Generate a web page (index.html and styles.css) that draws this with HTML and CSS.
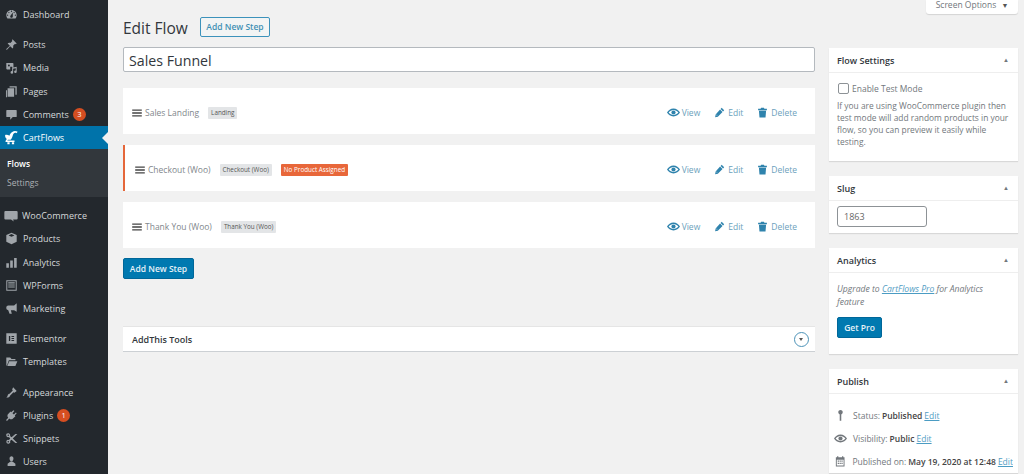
FILE: index.html
```html
<!DOCTYPE html>
<html lang="en">
<head>
  <meta charset="UTF-8" />
  <title>Edit Flow</title>
  <link rel="stylesheet" href="styles.css">
</head>
<body>
  <svg class="defs" width="0" height="0">
    <symbol id="i-eye" viewBox="0 0 20 20"><path fill-rule="evenodd" d="M10 4C5.500 4 2 7 0 10c2 3 5.500 6 10 6s8-3 10-6c-2-3-5.500-6-10-6zm0 2.200c2.600 0 5.800 1.400 7.500 3.800-1.700 2.400-4.900 3.800-7.500 3.800S4.200 12.400 2.500 10C4.200 7.600 7.400 6.200 10 6.200z"/><circle cx="10" cy="10" r="3.200"/></symbol>
    <symbol id="i-pencil" viewBox="0 0 20 20"><path fill-rule="evenodd" d="M14 1.500l4.500 4.500-2 2-4.500-4.500zM11 4.500L15.500 9 7 17.500l-5 1 1-5zM5 13.500L4.500 15.500l2-.5z"/></symbol>
    <symbol id="i-trash" viewBox="0 0 20 20"><path d="M7.500 1.500h5l1 1.500H18V6H2V3h4.500zM3.500 7h13l-1 12h-11z"/></symbol>
    <symbol id="i-menu" viewBox="0 0 20 20"><path d="M2 4h16v2.200H2zM2 8.900h16v2.200H2zM2 13.800h16V16H2z"/></symbol>
  </svg>

  <div class="layout">
    <nav class="sidebar">
      <div class="menu-group">
        <a class="menu-item"><svg viewBox="0 0 20 20"><path fill-rule="evenodd" d="M3.760 16h12.480c1.100-1.370 1.760-3.110 1.760-5 0-4.420-3.580-8-8-8s-8 3.580-8 8c0 1.890.66 3.630 1.760 5zM10 4c.55 0 1 .45 1 1s-.45 1-1 1-1-.45-1-1 .45-1 1-1zM6 6c.55 0 1 .45 1 1s-.45 1-1 1-1-.45-1-1 .45-1 1-1zm8 0c.55 0 1 .45 1 1s-.45 1-1 1-1-.45-1-1 .45-1 1-1zm-5.370 5.550L12 7v6c0 1.100-.9 2-2 2s-2-.9-2-2c0-.57.24-1.080.63-1.450zM4 10c.55 0 1 .45 1 1s-.45 1-1 1-1-.45-1-1 .45-1 1-1zm12 0c.55 0 1 .45 1 1s-.45 1-1 1-1-.45-1-1 .45-1 1-1z"/></svg>Dashboard</a>
      </div>
      <div class="menu-group">
        <a class="menu-item"><svg viewBox="0 0 20 20"><path d="M11.500 2l6.500 6.500-1.500 1-1-.5-3 3c.5 2 .2 3.200-.8 4.300L8 12.500 3 18l-1 0 0-1 5.500-5L4 8.300c1.100-1 2.300-1.300 4.300-.8l3-3-.5-1z"/></svg>Posts</a>
        <a class="menu-item"><svg viewBox="0 0 20 20"><path fill-rule="evenodd" d="M2 3h10l1 1v6h-2V9H8v4H3l-1-1zM6 5.500a1.500 1.500 0 1 0 0 3 1.500 1.500 0 0 0 0-3zM18 9v7.500a2 2 0 1 1-1.500-1.900V11l-4 1v5.500a2 2 0 1 1-1.500-1.900V10.500z"/></svg>Media</a>
        <a class="menu-item"><svg viewBox="0 0 20 20"><path d="M7 2h11v13h-2V4H7zM4 5h10v13H4zM1.500 8H3v11h9v-.1H1.500z"/></svg>Pages</a>
        <a class="menu-item"><svg viewBox="0 0 20 20"><path d="M3 3h14a1 1 0 0 1 1 1v9a1 1 0 0 1-1 1h-5l-4 4v-4H3a1 1 0 0 1-1-1V4a1 1 0 0 1 1-1z"/></svg>Comments<span class="badge">3</span></a>
        <a class="menu-item current"><svg class="logo" viewBox="0 0 20 20"><path d="M11 2.500c2-1.500 4.500-1.500 7-.5l-.8 2.200c-1.700-.7-3.200-.7-4.200.3-.8.8-1 1.800-1.500 3.500-.6 2-1.300 3.800-2.700 5H6c-1 0-1.400.4-1.500 1H14v2H2c0-2 .8-3.300 2-4C2.300 11 1.300 9.300 1.500 6.500c2-.6 4.300-.2 5.700 1.300.6-2.200 1.700-4.200 3.800-5.300zM4.500 16.200h3V19h-3zM10.500 16.200h3V19h-3z"/></svg>CartFlows</a>
        <div class="submenu">
          <a class="sub-item active">Flows</a>
          <a class="sub-item">Settings</a>
        </div>
      </div>
      <div class="menu-group">
        <a class="menu-item"><svg class="woo" viewBox="0 0 20 20"><path d="M2 3h16a1.500 1.500 0 0 1 1.500 1.500v9A1.500 1.500 0 0 1 18 15h-5l1 3-4-3H2a1.500 1.500 0 0 1-1.500-1.500v-9A1.500 1.500 0 0 1 2 3z"/></svg>WooCommerce</a>
        <a class="menu-item"><svg viewBox="0 0 20 20"><path d="M10 1l8 3.500v10.500L10 19l-8-4V4.500zM10 3.200L5.500 5.200 10 7.200l4.500-2z"/></svg>Products</a>
        <a class="menu-item"><svg viewBox="0 0 20 20"><path d="M2 11h4v7H2zM8 7h4v11H8zM14 3h4v15h-4z"/></svg>Analytics</a>
        <a class="menu-item"><svg viewBox="0 0 20 20"><path fill-rule="evenodd" d="M2 2h16v16H2zM3.500 3.500v13h13v-13zM5 5h10v2H5zM5 8.500h10v1.500H5zM5 11.500h10V13H5z"/></svg>WPForms</a>
        <a class="menu-item"><svg viewBox="0 0 20 20"><path d="M18 2v13l-4-2.500H9l1.500 5.500H7L5 12.500C3 12.500 2 11 2 9s1-3.500 3-3.500h9z"/></svg>Marketing</a>
      </div>
      <div class="menu-group">
        <a class="menu-item"><svg viewBox="0 0 20 20"><path fill-rule="evenodd" d="M2 2h16v16H2zM6 6v8h2V6zM10 6v1.600h4V6zM10 9.200v1.600h4V9.200zM10 12.400V14h4v-1.600z"/></svg>Elementor</a>
        <a class="menu-item"><svg viewBox="0 0 20 20"><path d="M2 4h6l2 2h6v2H6l-3 8H2zM6.500 9.500H19L16 17H3.500z"/></svg>Templates</a>
      </div>
      <div class="menu-group">
        <a class="menu-item"><svg viewBox="0 0 20 20"><path d="M12.500 2l5.500 5.500-3.500 3-1.500-1-5 5c-.8 2-2.500 3.500-6 3.500 1.800-1.200 2-3 2.500-4.500.5-1 1.500-1.500 2.500-1.500l5-5-1-1.500z"/></svg>Appearance</a>
        <a class="menu-item"><svg viewBox="0 0 20 20"><path d="M13 2l1.500 1.200-3 3.300 2.200 2 3-3.300L18 6.500l-3 3.500 1 1-4.500 4.500c-2 .8-3.500.3-5-1L3.500 18H2v-1.500l3-3c-1.200-1.500-1.700-3-.8-5L8.500 4l1 1z"/></svg>Plugins<span class="badge">1</span></a>
        <a class="menu-item"><svg viewBox="0 0 20 20"><path fill-rule="evenodd" d="M5 2a3 3 0 0 1 2.800 4.100L10 8l6-5h3l-7 7 7 7h-3l-6-5-2.200 1.900A3 3 0 1 1 6 12.200L8 10 6 7.800A3 3 0 1 1 5 2zm0 1.800a1.200 1.200 0 1 0 0 2.400 1.200 1.200 0 0 0 0-2.400zm0 10a1.200 1.200 0 1 0 0 2.400 1.200 1.200 0 0 0 0-2.400z"/></svg>Snippets</a>
        <a class="menu-item"><svg viewBox="0 0 20 20"><path d="M10 2c1.800 0 3 1.500 3 3.500S11.800 10 10 10 7 7.500 7 5.500 8.200 2 10 2zM8 10.500h4l4 3V17H4v-3.500z"/></svg>Users</a>
      </div>
    </nav>

    <main class="content">
      <div class="screen-bar"><button class="screen-options">Screen Options <span class="caret">▼</span></button></div>
      <div class="columns">
        <div class="main-col">
          <div class="page-head">
            <h1>Edit Flow</h1>
            <a class="btn-outline">Add New Step</a>
          </div>
          <input class="title-input" type="text" value="Sales Funnel" />

          <div class="step">
            <svg class="handle"><use href="#i-menu"/></svg>
            <span class="step-name">Sales Landing</span>
            <span class="tag">Landing</span>
            <div class="actions">
              <a class="action"><svg class="eye"><use href="#i-eye"/></svg>View</a>
              <a class="action"><svg><use href="#i-pencil"/></svg>Edit</a>
              <a class="action"><svg><use href="#i-trash"/></svg>Delete</a>
            </div>
          </div>
          <div class="step step-warn">
            <svg class="handle"><use href="#i-menu"/></svg>
            <span class="step-name">Checkout (Woo)</span>
            <span class="tag">Checkout (Woo)</span>
            <span class="tag tag-warn">No Product Assigned</span>
            <div class="actions">
              <a class="action"><svg class="eye"><use href="#i-eye"/></svg>View</a>
              <a class="action"><svg><use href="#i-pencil"/></svg>Edit</a>
              <a class="action"><svg><use href="#i-trash"/></svg>Delete</a>
            </div>
          </div>
          <div class="step">
            <svg class="handle"><use href="#i-menu"/></svg>
            <span class="step-name">Thank You (Woo)</span>
            <span class="tag">Thank You (Woo)</span>
            <div class="actions">
              <a class="action"><svg class="eye"><use href="#i-eye"/></svg>View</a>
              <a class="action"><svg><use href="#i-pencil"/></svg>Edit</a>
              <a class="action"><svg><use href="#i-trash"/></svg>Delete</a>
            </div>
          </div>

          <a class="btn-primary add-step">Add New Step</a>

          <div class="addthis">
            <span>AddThis Tools</span>
            <span class="toggle-circle"></span>
          </div>
        </div>

        <aside class="side-col">
          <section class="box box-flow">
            <h2>Flow Settings<span class="up">▲</span></h2>
            <div class="box-body">
              <label class="check"><span class="checkbox"></span>Enable Test Mode</label>
              <p>If you are using WooCommerce plugin then test mode will add random products in your flow, so you can preview it easily while testing.</p>
            </div>
          </section>
          <section class="box">
            <h2>Slug<span class="up">▲</span></h2>
            <div class="box-body slug-body"><input class="slug" type="text" value="1863" /></div>
          </section>
          <section class="box box-analytics">
            <h2>Analytics<span class="up">▲</span></h2>
            <div class="box-body">
              <p class="upgrade">Upgrade to <a>CartFlows Pro</a> for Analytics feature</p>
              <a class="btn-primary">Get Pro</a>
            </div>
          </section>
          <section class="box">
            <h2>Publish<span class="up">▲</span></h2>
            <div class="box-body publish">
              <div class="pub-row"><svg viewBox="0 0 20 20"><path d="M10 1.500a3.500 3.500 0 0 1 1.200 6.800V18h-2.400V8.300A3.500 3.500 0 0 1 10 1.500z"/></svg>Status: <b>Published</b> <a>Edit</a></div>
              <div class="pub-row"><svg class="pub-eye"><use href="#i-eye"/></svg>Visibility: <b>Public</b> <a>Edit</a></div>
              <div class="pub-row"><svg viewBox="0 0 20 20"><path fill-rule="evenodd" d="M3 3h2V1.500h2V3h6V1.500h2V3h2v15H3zM4.500 7v9.500h11V7zM6 8.500h2v2H6zM9 8.500h2v2H9zM12 8.500h2v2h-2zM6 12h2v2H6zM9 12h2v2H9zM12 12h2v2h-2z"/></svg>Published on: <b>May 19, 2020 at 12:48</b> <a>Edit</a></div>
            </div>
          </section>
        </aside>
      </div>
    </main>
  </div>
</body>
</html>
```

FILE: styles.css
```css
* {
  box-sizing: border-box;
}
html, body {
  height: 474px;
  overflow: hidden;
}
body {
  margin: 0;
  background: #f1f1f1;
  color: #444;
  font-family: "Open Sans", Arial, sans-serif;
  font-size: 9.5px;
}
.defs {
  position: absolute;
}
a {
  text-decoration: none;
}
.layout {
  display: flex;
  height: 474px;
}

/* left menu */
.sidebar {
  width: 108px;
  flex-shrink: 0;
  background: #23282d;
  padding-top: 3px;
}
.menu-group {
  margin-bottom: 7px;
}
.menu-item {
  display: flex;
  align-items: center;
  height: 23.2px;
  padding-left: 5px;
  color: #d5d8da;
  font-size: 9px;
}
.menu-item svg {
  flex-shrink: 0;
  width: 13px;
  height: 13px;
  margin-right: 5px;
  fill: #a0a5aa;
}
.menu-item svg.logo {
  width: 15px;
  height: 15px;
  margin: 0 4px 0 -1px;
}
.menu-item svg.woo {
  width: 14px;
  height: 14px;
  margin: 0 4px 0 -1px;
}
.menu-item.current {
  position: relative;
  background: #0073aa;
  color: #fff;
}
.menu-item.current svg {
  fill: #fff;
}
.menu-item.current::after {
  content: "";
  position: absolute;
  right: 0;
  top: 6px;
  border: 6px solid transparent;
  border-right-color: #f1f1f1;
  border-left: 0;
}
.badge {
  display: inline-block;
  width: 13px;
  height: 13px;
  margin-left: 4px;
  border-radius: 50%;
  background: #d54e21;
  color: #fff;
  font-size: 7.5px;
  line-height: 13px;
  text-align: center;
}
.submenu {
  background: #32373c;
  padding: 5px 0;
}
.sub-item {
  display: block;
  height: 19px;
  line-height: 19px;
  padding-left: 7px;
  color: #aeb2b5;
  font-size: 8.5px;
}
.sub-item.active {
  color: #fff;
  font-weight: 600;
}

/* content */
.content {
  flex: 1;
  min-width: 0;
  padding: 0 6px 0 15px;
}
.screen-bar {
  display: flex;
  justify-content: flex-end;
  height: 13px;
}
.screen-options {
  width: 92px;
  height: 14px;
  margin: 0;
  padding: 0 0 3px;
  border: 0;
  border-radius: 0 0 3px 3px;
  background: #fff;
  box-shadow: 0 1px 1px rgba(0,0,0,0.12);
  color: #72777c;
  font-family: inherit;
  font-size: 8.5px;
  line-height: 10px;
}
.caret {
  margin-left: 3px;
  font-size: 7px;
  color: #555;
}
.columns {
  display: flex;
  gap: 14px;
  align-items: flex-start;
}
.main-col {
  width: 692px;
  flex-shrink: 0;
}
.side-col {
  width: 189px;
  flex-shrink: 0;
  padding-top: 35px;
}

.page-head {
  display: flex;
  align-items: center;
  height: 22px;
  margin-top: 3px;
}
h1 {
  width: 77px;
  margin: 0;
  padding-top: 2px;
  color: #32373c;
  font-size: 15.5px;
  font-weight: 400;
}
.btn-outline {
  display: block;
  width: 70px;
  height: 20px;
  border: 1px solid #0073aa;
  border-radius: 2px;
  background: #f3f5f6;
  color: #0071a1;
  font-size: 8.5px;
  font-weight: 600;
  line-height: 17px;
  text-align: center;
  opacity: 0.75;
}
.title-input {
  display: block;
  width: 100%;
  height: 25px;
  margin: 9px 0 16px;
  padding: 1px 5px 0;
  border: 1px solid #b4b9be;
  border-radius: 2px;
  background: #fff;
  color: #32373c;
  font-family: inherit;
  font-size: 14.2px;
}

.step {
  display: flex;
  align-items: center;
  height: 46px;
  margin-bottom: 11px;
  padding: 3px 18px 0 8px;
  background: #fff;
}
.step-warn {
  border-left: 2px solid #e5673a;
  padding-left: 9px;
}
.handle {
  width: 12px;
  height: 12px;
  margin-right: 2px;
  fill: #444;
}
.step-name {
  margin-right: 9px;
  color: #82878c;
  font-size: 8.5px;
}
.tag {
  height: 12px;
  margin-right: 5px;
  padding: 0 3px;
  border-radius: 1px;
  background: #e3e5e7;
  color: #555;
  font-size: 6.3px;
  line-height: 12px;
}
.tag-warn {
  margin-left: 4px;
  background: #e8673a;
  color: #fff;
}
.actions {
  display: flex;
  gap: 14px;
  margin-left: auto;
}
.action {
  display: flex;
  align-items: center;
  color: #6c9fbc;
  font-size: 8.5px;
}
.action svg {
  width: 11px;
  height: 11px;
  margin-right: 3px;
  fill: #2f83ad;
}
.action svg.eye {
  width: 15px;
  height: 13px;
  margin-right: 1px;
}
.btn-primary {
  display: block;
  width: 71px;
  height: 21px;
  border: 1px solid #006799;
  border-radius: 2px;
  background: #0079b0;
  color: #e6f2f8;
  font-size: 8.5px;
  font-weight: 600;
  line-height: 19px;
  text-align: center;
}
.add-step {
  margin-top: -1px;
}
.addthis {
  display: flex;
  align-items: center;
  justify-content: space-between;
  height: 26px;
  margin-top: 47px;
  padding: 0 6px 0 9px;
  border-top: 1px solid #e5e5e5;
  border-bottom: 1px solid #ccd0d4;
  background: #fff;
  color: #32373c;
  font-size: 9px;
  font-weight: 600;
}
.toggle-circle {
  position: relative;
  width: 15px;
  height: 15px;
  border: 1px solid #4c93b8;
  border-radius: 50%;
}
.toggle-circle::after {
  content: "";
  position: absolute;
  left: 4px;
  top: 5px;
  border: 2.5px solid transparent;
  border-top: 3px solid #555;
  border-bottom: 0;
}

/* right hand boxes */
.box {
  margin-bottom: 15px;
  background: #fff;
  box-shadow: 0 1px 1px rgba(0,0,0,0.1);
}
.box-flow {
  height: 113px;
}
.box-analytics {
  height: 106px;
}
.box h2 {
  display: flex;
  justify-content: space-between;
  align-items: center;
  height: 25px;
  margin: 0;
  padding: 0 9px 0 8px;
  border-bottom: 1px solid #eee;
  color: #32373c;
  font-size: 9px;
  font-weight: 600;
}
.up {
  color: #72777c;
  font-size: 6px;
  font-weight: 400;
}
.box-body {
  padding: 8px 5px 0 8px;
  color: #72777c;
  font-size: 8.5px;
}
.check {
  display: flex;
  align-items: center;
  height: 14px;
}
.checkbox {
  width: 11px;
  height: 11px;
  margin: 0 3px 0 1px;
  border: 1px solid #8d9296;
  border-radius: 2px;
}
.box-body p {
  margin: 5px 0 0;
  font-size: 8.4px;
  line-height: 12px;
}
.slug-body {
  padding: 5px 8px 6px;
}
.slug {
  display: block;
  width: 90px;
  height: 21px;
  padding: 0 6px;
  border: 1px solid #8d9296;
  border-radius: 3px;
  color: #666;
  font-family: inherit;
  font-size: 9px;
}
.box-body .upgrade {
  max-width: 165px;
  margin: 2px 0 8px;
  font-size: 8.6px;
  font-style: italic;
  line-height: 13px;
}
.upgrade a, .pub-row a {
  color: #0073aa;
  text-decoration: underline;
  opacity: 0.7;
}
.box-analytics .btn-primary {
  width: 45px;
}
.publish {
  padding: 10px 5px 0;
}
.pub-row {
  display: flex;
  align-items: center;
  gap: 2px;
  height: 23px;
  white-space: nowrap;
}
.pub-row b {
  color: #444;
  font-weight: 600;
}
.pub-row svg {
  width: 13px;
  height: 13px;
  margin-right: 4px;
  fill: #72777c;
}
```
